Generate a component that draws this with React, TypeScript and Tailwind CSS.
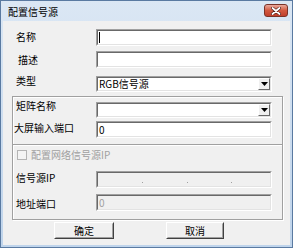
import React from "react";

const font = { fontFamily: '"Noto Sans CJK SC", "Noto Sans", sans-serif' };

function Sunken({ children, disabled = false, className = "" }: { children?: React.ReactNode; disabled?: boolean; className?: string }) {
  return (
    <div className={`flex border border-t-[#a0a0a0] border-l-[#a0a0a0] border-r-[#ffffff] border-b-[#ffffff] ${className}`}>
      <div
        className={`flex flex-1 items-center border border-t-[#696969] border-l-[#696969] border-r-[#e3e3e3] border-b-[#e3e3e3] ${
          disabled ? "bg-[#f0f0f0]" : "bg-white"
        }`}
      >
        {children}
      </div>
    </div>
  );
}

function Combo({ text }: { text?: string }) {
  return (
    <Sunken className="w-[176px] h-[16px]">
      <span className="flex-1 pl-[1px] text-[10px] leading-[10px] text-black">{text}</span>
      <div className="w-[12px] h-[12px] flex items-center justify-center bg-[#f0f0f0] border border-t-[#ffffff] border-l-[#ffffff] border-r-[#696969] border-b-[#696969]">
        <svg width="7" height="4" viewBox="0 0 7 4">
          <polygon points="0,0 7,0 3.5,4" fill="#000" />
        </svg>
      </div>
    </Sunken>
  );
}

function Button({ label, w }: { label: string; w: string }) {
  return (
    <div className={`${w} h-[17px] flex border border-t-[#ffffff] border-l-[#ffffff] border-r-[#404040] border-b-[#404040]`}>
      <div className="flex-1 flex items-center justify-center bg-[#f0f0f0] border border-t-[#f0f0f0] border-l-[#f0f0f0] border-r-[#a0a0a0] border-b-[#a0a0a0] text-[10px] leading-[10px] text-black">
        {label}
      </div>
    </div>
  );
}

export default function App() {
  return (
    <div style={font} className="w-[293px] h-[248px] flex flex-col border border-[#5a7aa1] bg-gradient-to-b from-[#dbe7f4] to-[#bfd4eb] px-[2px] pb-[2px]">
      {/* Title bar */}
      <div className="h-[20px] flex items-start">
        <span className="ml-[5px] mt-[6px] text-[10px] leading-[10px] text-black">配置信号源</span>
        <div className="ml-auto mr-[2px] mt-[3px] w-[24px] h-[13px] rounded-[3px] border border-[#7a3328] bg-gradient-to-b from-[#e9a99c] via-[#d2583f] to-[#c0402c] flex items-center justify-center">
          <svg width="10" height="8" viewBox="0 0 10 8">
            <path d="M1.5 1 L8.5 7 M8.5 1 L1.5 7" stroke="#4a1a14" strokeWidth="3" strokeLinecap="round" />
            <path d="M1.5 1 L8.5 7 M8.5 1 L1.5 7" stroke="#ffffff" strokeWidth="1.8" strokeLinecap="round" />
          </svg>
        </div>
      </div>

      {/* Content */}
      <div className="flex-1 bg-[#f0f0f0] flex flex-col text-[10px] leading-[10px] text-black">
        {/* 名称 */}
        <div className="mt-[8px] flex items-start">
          <div className="w-[93px] pl-[13px] mt-[3px]">名称</div>
          <Sunken className="w-[176px] h-[17px]">
            <div className="ml-[1px] w-[1px] h-[11px] bg-black" />
          </Sunken>
        </div>
        {/* 描述 */}
        <div className="mt-[5px] flex items-start">
          <div className="w-[93px] pl-[15px] mt-[4px]">描述</div>
          <Sunken className="w-[176px] h-[17px]" />
        </div>
        {/* 类型 */}
        <div className="mt-[8px] flex items-start">
          <div className="w-[93px] pl-[13px] mt-[0px]">类型</div>
          <Combo text="RGB信号源" />
        </div>

        {/* Group box */}
        <div className="mt-[4px] ml-[9px] w-[271px] flex flex-col border border-[#a0a0a0] shadow-[inset_1px_1px_0_#ffffff,1px_1px_0_#ffffff] pb-[8px]">
          <div className="mt-[5px] flex items-start">
            <div className="w-[83px] pl-[3px] -mt-[1px]">矩阵名称</div>
            <Combo />
          </div>
          <div className="mt-[3px] flex items-start">
            <div className="w-[83px] pl-[1px] mt-[2px]">大屏输入端口</div>
            <Sunken className="w-[176px] h-[17px]">
              <span className="pl-[1px]">0</span>
            </Sunken>
          </div>
          <div className="mt-[6px] h-[2px] border-t border-t-[#a0a0a0] border-b border-b-[#ffffff]" />
          <div className="mt-[4px] flex items-center h-[10px]">
            <div className="ml-[4px] w-[10px] h-[10px] border border-[#b4b4b4] bg-[#f4f4f4]" />
            <span className="ml-[4px] text-[#a0a0a0]">配置网络信号源IP</span>
          </div>
          <div className="mt-[11px] flex items-start">
            <div className="w-[83px] pl-[3px] mt-[2px]">信号源IP</div>
            <Sunken disabled className="w-[176px] h-[17px]">
              <div className="flex-1 relative h-full">
                <span className="absolute left-[44px] top-[9px] w-[1px] h-[1px] bg-[#a0a0a0]" />
                <span className="absolute left-[89px] top-[9px] w-[1px] h-[1px] bg-[#a0a0a0]" />
                <span className="absolute left-[133px] top-[9px] w-[1px] h-[1px] bg-[#a0a0a0]" />
              </div>
            </Sunken>
          </div>
          <div className="mt-[6px] flex items-start">
            <div className="w-[83px] pl-[3px] mt-[5px]">地址端口</div>
            <Sunken disabled className="w-[176px] h-[17px]">
              <span className="pl-[1px] text-[#a0a0a0]">0</span>
            </Sunken>
          </div>
        </div>

        {/* Buttons */}
        <div className="mt-[2px] flex items-start">
          <div className="ml-[51px]">
            <Button label="确定" w="w-[60px]" />
          </div>
          <div className="ml-[52px]">
            <Button label="取消" w="w-[58px]" />
          </div>
        </div>
      </div>
    </div>
  );
}
